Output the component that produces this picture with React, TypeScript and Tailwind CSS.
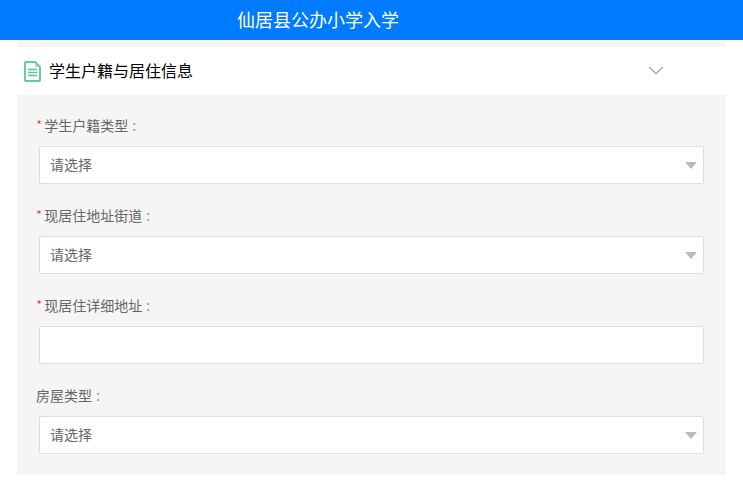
const FONT = "font-['Microsoft_YaHei','Noto_Sans_CJK_SC',sans-serif]";

function FileIcon() {
  return (
    <svg width="17" height="21" viewBox="0 0 17 21" fill="none">
      <path d="M1.800 1h9.400l4.800 4.800v13.400a.8.8 0 0 1-.8.8H1.800a.8.8 0 0 1-.8-.8V1.800a.8.8 0 0 1 .8-.8z" fill="#f3fbf7" stroke="#45b583" strokeWidth="1.500" />
      <path d="M11 1.200v4.600h4.800z" fill="#9bdcbd" />
      <path d="M4 8.500h9M4 11.500h9M4 14.500h9" stroke="#62c596" strokeWidth="1.700" />
    </svg>
  );
}

function Field({ label, required, select }: { label: string; required?: boolean; select?: boolean }) {
  return (
    <div className="h-[90px] pl-[19px] pr-[22px]">
      <div className="h-[21px] text-[14px] leading-[21px] text-[#666]">
        {required && <span className="mr-[2px] font-light text-[#f22]">*</span>}
        {label}
        <span className="ml-[1px] text-[#999]"> :</span>
      </div>
      <div className="relative mt-[10px] ml-[3px] h-[38px] rounded-[2px] border border-[#ddd] bg-white pl-[10px] text-[14px] leading-[34px] text-[#666]">
        {select && "请选择"}
        {select && (
          <span className="absolute right-[6px] top-[15px] h-0 w-0 border-x-[6px] border-t-[7px] border-x-transparent border-t-[#bbb]" />
        )}
      </div>
    </div>
  );
}

export default function App() {
  return (
    <div className={`h-[485px] w-[743px] overflow-hidden bg-white ${FONT}`}>
      <div className="h-10 bg-[#007aff] pl-[237px] text-[18px] leading-[38px] text-white">仙居县公办小学入学</div>
      <div className="ml-[17px] w-[709px]">
        <div className="h-[7px] bg-[#f5f5f5]" />
        <div className="flex h-12 items-center bg-white pl-[7px]">
          <FileIcon />
          <span className="mb-[2px] ml-[8px] text-[16px] text-black">学生户籍与居住信息</span>
          <svg className="mb-[2px] ml-auto mr-[62px]" width="16" height="9" viewBox="0 0 16 9" fill="none">
            <path d="M1 1l7 6.500L15 1" stroke="#aaa" strokeWidth="1.300" />
          </svg>
        </div>
        <div className="h-[380px] bg-[#f5f5f5] pt-[20px]">
          <Field label="学生户籍类型" required select />
          <Field label="现居住地址街道" required select />
          <Field label="现居住详细地址" required />
          <Field label="房屋类型" select />
        </div>
      </div>
    </div>
  );
}
